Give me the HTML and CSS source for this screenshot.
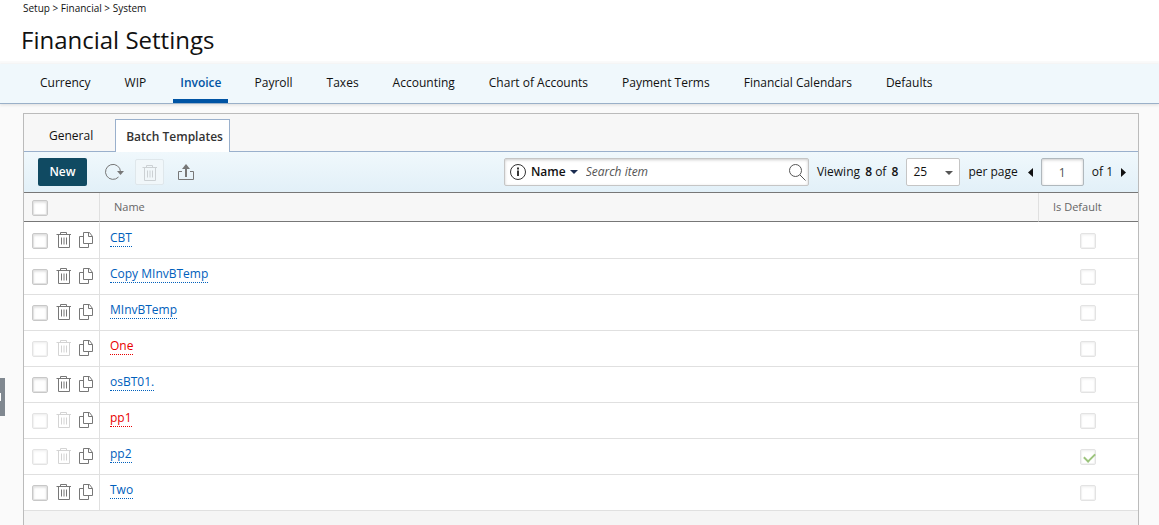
FILE: index.html
```html
<!DOCTYPE html>
<html lang="en">
<head>
<meta charset="utf-8">
<meta name="viewport" content="width=device-width, initial-scale=1">
<title>Financial Settings</title>
<link rel="stylesheet" href="styles.css">
</head>
<body>
<svg class="sprite" aria-hidden="true">
  <symbol id="trash" viewBox="0 0 16 17"><path d="M0.500 3.500H15M4.500 3.500v-2h6v2M2.500 3.500v13h11v-13M5.500 6.500v7M8 6.500v7M10.500 6.500v7"/></symbol>
  <symbol id="copy" viewBox="0 0 14 17"><path d="M4.500 5.500h-4v11h9v-4M4.500 1.500h6l3 4v7h-9zM9.500 1.500v4h4"/></symbol>
</svg>
<header class="page-header">
  <div class="breadcrumb">Setup &gt; Financial &gt; System</div>
  <h1 class="title">Financial Settings</h1>
</header>
<nav class="main-nav">
  <a class="nav-link" href="#">Currency</a>
  <a class="nav-link" href="#">WIP</a>
  <a class="nav-link active" href="#" aria-current="page">Invoice</a>
  <a class="nav-link" href="#">Payroll</a>
  <a class="nav-link" href="#">Taxes</a>
  <a class="nav-link" href="#">Accounting</a>
  <a class="nav-link" href="#">Chart of Accounts</a>
  <a class="nav-link" href="#">Payment Terms</a>
  <a class="nav-link" href="#">Financial Calendars</a>
  <a class="nav-link" href="#">Defaults</a>
</nav>
<button class="drawer" aria-label="Open side panel"></button>
<main class="panel">
  <div class="tabs">
    <a class="tab" href="#">General</a>
    <a class="tab selected" href="#">Batch Templates</a>
  </div>
  <div class="toolbar">
    <button class="new-btn">New</button>
    <button class="tool" aria-label="Refresh"><svg width="20" height="18" viewBox="0 0 20 18"><path d="M14.500 14A7.500 7.500 0 1 1 16.500 8.500"/><path class="solid" d="M13 8h7l-3.500 4z"/></svg></button>
    <button class="tool disabled" aria-label="Delete" disabled><svg width="16" height="17"><use href="#trash"/></svg></button>
    <button class="tool" aria-label="Export"><svg width="18" height="17" viewBox="0 0 18 17"><path d="M5 7.500H1.500v8h15v-8H13"/><path class="thick" d="M9 2v11"/><path class="solid" d="M9 0l4 5H5z"/></svg></button>
    <div class="search">
      <svg class="info" width="16" height="16" viewBox="0 0 16 16"><circle cx="8" cy="8" r="7.500"/><path class="thick" d="M8 6.500V12M8 3.500v2"/></svg>
      <button class="field-btn">Name <svg width="8" height="4" viewBox="0 0 8 4"><path d="M0 0h8L4 4z"/></svg></button>
      <input class="search-input" type="text" placeholder="Search item" aria-label="Search item">
      <button class="search-btn" aria-label="Search"><svg width="17" height="17" viewBox="0 0 17 17"><circle cx="6.500" cy="6.500" r="6"/><path d="M11 11l5.500 5.500"/></svg></button>
    </div>
    <span class="viewing">Viewing <b>8</b> of <b>8</b></span>
    <label class="page-size"><span class="select-box"><select class="size-select"><option>25</option><option>50</option></select><svg class="chevron" width="8" height="4" viewBox="0 0 8 4"><path d="M0 0h8L4 4z"/></svg></span>per page</label>
    <div class="pager">
      <button class="arrow" aria-label="Previous page"><svg width="5" height="9" viewBox="0 0 5 9"><path d="M5 0v9L0 4.500z"/></svg></button>
      <label class="page-label"><input class="page-input" type="text" value="1" aria-label="Page">of 1</label>
      <button class="arrow" aria-label="Next page"><svg width="5" height="9" viewBox="0 0 5 9"><path d="M0 0v9l5-4.500z"/></svg></button>
    </div>
  </div>
  <table class="grid">
    <thead>
      <tr><th class="col-actions"><input class="check" type="checkbox" aria-label="Select all"></th><th class="col-name">Name</th><th class="col-default">Is Default</th></tr>
    </thead>
    <tbody>
      <tr>
        <td class="col-actions"><div class="actions"><input class="check" type="checkbox" aria-label="Select CBT"><button class="icon" aria-label="Delete CBT"><svg width="16" height="17"><use href="#trash"/></svg></button><button class="icon" aria-label="Copy CBT"><svg width="14" height="17"><use href="#copy"/></svg></button></div></td>
        <td class="col-name"><a class="name" href="#">CBT</a></td>
        <td class="col-default"><input class="check" type="checkbox" disabled aria-label="CBT is default"></td>
      </tr>
      <tr>
        <td class="col-actions"><div class="actions"><input class="check" type="checkbox" aria-label="Select Copy MInvBTemp"><button class="icon" aria-label="Delete Copy MInvBTemp"><svg width="16" height="17"><use href="#trash"/></svg></button><button class="icon" aria-label="Copy Copy MInvBTemp"><svg width="14" height="17"><use href="#copy"/></svg></button></div></td>
        <td class="col-name"><a class="name" href="#">Copy MInvBTemp</a></td>
        <td class="col-default"><input class="check" type="checkbox" disabled aria-label="Copy MInvBTemp is default"></td>
      </tr>
      <tr>
        <td class="col-actions"><div class="actions"><input class="check" type="checkbox" aria-label="Select MInvBTemp"><button class="icon" aria-label="Delete MInvBTemp"><svg width="16" height="17"><use href="#trash"/></svg></button><button class="icon" aria-label="Copy MInvBTemp"><svg width="14" height="17"><use href="#copy"/></svg></button></div></td>
        <td class="col-name"><a class="name" href="#">MInvBTemp</a></td>
        <td class="col-default"><input class="check" type="checkbox" disabled aria-label="MInvBTemp is default"></td>
      </tr>
      <tr>
        <td class="col-actions"><div class="actions"><input class="check" type="checkbox" disabled aria-label="Select One"><button class="icon" disabled aria-label="Delete One"><svg width="16" height="17"><use href="#trash"/></svg></button><button class="icon" aria-label="Copy One"><svg width="14" height="17"><use href="#copy"/></svg></button></div></td>
        <td class="col-name"><a class="name inactive" href="#">One</a></td>
        <td class="col-default"><input class="check" type="checkbox" disabled aria-label="One is default"></td>
      </tr>
      <tr>
        <td class="col-actions"><div class="actions"><input class="check" type="checkbox" aria-label="Select osBT01."><button class="icon" aria-label="Delete osBT01."><svg width="16" height="17"><use href="#trash"/></svg></button><button class="icon" aria-label="Copy osBT01."><svg width="14" height="17"><use href="#copy"/></svg></button></div></td>
        <td class="col-name"><a class="name" href="#">osBT01.</a></td>
        <td class="col-default"><input class="check" type="checkbox" disabled aria-label="osBT01. is default"></td>
      </tr>
      <tr>
        <td class="col-actions"><div class="actions"><input class="check" type="checkbox" disabled aria-label="Select pp1"><button class="icon" disabled aria-label="Delete pp1"><svg width="16" height="17"><use href="#trash"/></svg></button><button class="icon" aria-label="Copy pp1"><svg width="14" height="17"><use href="#copy"/></svg></button></div></td>
        <td class="col-name"><a class="name inactive" href="#">pp1</a></td>
        <td class="col-default"><input class="check" type="checkbox" disabled aria-label="pp1 is default"></td>
      </tr>
      <tr>
        <td class="col-actions"><div class="actions"><input class="check" type="checkbox" disabled aria-label="Select pp2"><button class="icon" disabled aria-label="Delete pp2"><svg width="16" height="17"><use href="#trash"/></svg></button><button class="icon" aria-label="Copy pp2"><svg width="14" height="17"><use href="#copy"/></svg></button></div></td>
        <td class="col-name"><a class="name" href="#">pp2</a></td>
        <td class="col-default"><input class="check" type="checkbox" disabled checked aria-label="pp2 is default"></td>
      </tr>
      <tr>
        <td class="col-actions"><div class="actions"><input class="check" type="checkbox" aria-label="Select Two"><button class="icon" aria-label="Delete Two"><svg width="16" height="17"><use href="#trash"/></svg></button><button class="icon" aria-label="Copy Two"><svg width="14" height="17"><use href="#copy"/></svg></button></div></td>
        <td class="col-name"><a class="name" href="#">Two</a></td>
        <td class="col-default"><input class="check" type="checkbox" disabled aria-label="Two is default"></td>
      </tr>
    </tbody>
  </table>
</main>
</body>
</html>
```
FILE: styles.css
```css
* { box-sizing: border-box; }
body {
  margin: 0;
  min-height: 100vh;
  display: flex;
  flex-direction: column;
  background: #fafafa;
  color: #111;
  font: 12px/18px "Open Sans", sans-serif;
}
button, input, select { font: inherit; color: inherit; }
button { border: 0; padding: 0; background: none; cursor: pointer; }
a { color: inherit; text-decoration: none; }
svg { display: block; }
.sprite { position: absolute; width: 0; height: 0; }

.page-header { background: #fff; padding: 1px 21px 5px; }
.breadcrumb { font-size: 10px; line-height: 14px; padding-left: 2px; }
.title { margin: 9px 0 0; font-size: 24px; line-height: 32px; font-weight: 400; }

.main-nav {
  display: flex;
  gap: 20px;
  margin-top: 3px;
  padding: 0 33px;
  background: #f0f8fc;
  border-bottom: 1px solid #9ab0c8;
  box-shadow: 0 1px 3px #ddd;
}
.nav-link {
  padding: 10px 7px 7px;
  border-bottom: 4px solid transparent;
  white-space: nowrap;
}
.nav-link.active { padding-right: 6px; color: #0054a4; border-color: #0054a4; font-weight: 600; }

.drawer {
  position: absolute;
  left: 0;
  top: 378px;
  width: 5px;
  height: 38px;
  background: #808890;
}
.drawer::before {
  content: "";
  display: block;
  width: 1px;
  height: 8px;
  background: #fff;
}

.panel {
  flex: 1;
  margin: 9px 20px 0 23px;
  border: 1px solid #bbb;
  border-bottom: 0;
  background: #f5f5f5;
}
.tabs {
  display: flex;
  align-items: flex-end;
  height: 38px;
  padding-left: 14px;
  border-bottom: 1px solid #9ab0cc;
  background: #f7f7f7;
}
.tab { padding: 8px 11px 6px; margin-right: 11px; }
.tab.selected {
  margin: 0 0 -1px;
  padding: 8px 6px 6px 10px;
  background: #fff;
  border: 1px solid #9ab0cc;
  border-bottom: 0;
  font-weight: 600;
  color: #333;
}

.toolbar {
  display: flex;
  align-items: center;
  height: 41px;
  padding: 0 12px 0 14px;
  background: linear-gradient(#f0f8fc, #e2f0f8);
  border-bottom: 1px solid #777;
}
.new-btn {
  width: 49px;
  height: 28px;
  border-radius: 2px;
  background: #104a62;
  color: #fff;
  font-weight: 600;
  margin-right: 12px;
}
.tool {
  display: flex;
  align-items: center;
  justify-content: center;
  width: 29px;
  height: 26px;
  margin-right: 7px;
  border: 1px solid transparent;
}
.tool svg, .icon svg { flex: none; fill: none; stroke: #777; }
.tool .solid { fill: #777; stroke: none; }
.tool .thick { stroke-width: 2; }
.tool.disabled { border-color: #dfe7eb; background: #f1f7fa; border-radius: 2px; }
.tool.disabled svg { stroke: #ccd1d4; }

.search {
  display: flex;
  align-items: center;
  flex: 0 1 305px;
  min-width: 0;
  height: 28px;
  margin-left: auto;
  padding: 0 2px 0 5px;
  border: 1px solid #c5c5c5;
  border-radius: 2px;
  background: #fff;
  box-shadow: inset 0 1px 3px #ccc;
}
.info { flex: none; fill: none; stroke: #333; }
.info .thick { stroke-width: 2; }
.field-btn { display: flex; align-items: center; gap: 4px; margin: 0 8px 0 5px; font-weight: 600; }
.field-btn svg { fill: #1b2c50; }
.search-input { flex: 1; min-width: 0; border: 0; padding: 0; background: none; outline: 0; }
.search-input::placeholder { color: #555; font-style: italic; opacity: 1; }
.search-btn svg { fill: none; stroke: #555; }
.viewing { margin: 0 8px; white-space: nowrap; }
.viewing b { margin-left: 2px; font-weight: 600; }
.page-size, .page-label { display: flex; align-items: center; gap: 8px; white-space: nowrap; }
.select-box { position: relative; }
.size-select {
  appearance: none;
  display: block;
  width: 54px;
  height: 28px;
  padding: 0 6px;
  border: 1px solid #c5c5c5;
  border-radius: 2px;
  background: #fff;
}
.chevron { position: absolute; right: 7px; top: 13px; fill: #555; pointer-events: none; }
.pager { display: flex; align-items: center; gap: 8px; margin-left: 10px; }
.arrow svg { fill: #111; }
.page-input {
  width: 43px;
  height: 28px;
  padding: 0;
  border: 1px solid #b0b8bd;
  border-radius: 2px;
  background: #fff;
  box-shadow: inset 0 1px 3px #ccc;
  text-align: center;
  color: #555;
}

.grid { width: 100%; border-collapse: separate; border-spacing: 0; background: #fff; }
.grid th, .grid td { padding: 0; text-align: left; vertical-align: top; }
.grid thead th {
  height: 29px;
  vertical-align: middle;
  background: #f7f7f7;
  border-bottom: 1px solid #777;
  color: #666;
  font-size: 11px;
  line-height: 16px;
  font-weight: 400;
}
.grid td { height: 36px; border-bottom: 1px solid #e0e0e0; }
.grid tbody tr:first-child td { height: 37px; border-top: 1px solid #fff; }
.grid .col-actions { width: 76px; border-right: 1px solid #e0e0e0; padding-left: 8px; }
.grid .col-name { padding-left: 10px; }
.grid th.col-name { padding-left: 14px; }
.grid .col-default { width: 100px; }
.grid th.col-default { padding-left: 14px; border-left: 1px solid #e0e0e0; }
.grid td.col-default { padding-top: 10px; }
.check {
  appearance: none;
  display: block;
  width: 16px;
  height: 16px;
  margin: 0;
  border: 1px solid #c8c8c8;
  border-radius: 2px;
  background: #fff;
  box-shadow: inset 0 0 0 1px #e2e2e2, inset 0 1px 3px #ccc;
}
thead .check { margin-top: 2px; }
.check:disabled { border-color: #e3e3e3; box-shadow: inset 0 0 0 1px #f2f2f2, inset 0 1px 3px #eee; }
.col-default .check { margin: 0 auto; }
.check:checked::before {
  content: "";
  display: block;
  width: 9px;
  height: 5px;
  margin: 3px 0 0 3px;
  border: solid #9cc47c;
  border-width: 0 0 2px 2px;
  transform: rotate(-45deg);
}
.actions { display: flex; align-items: flex-start; padding-top: 8px; }
.actions .check { margin: 2px 8px 0 0; }
.icon + .icon { margin-left: 7px; }
.icon:disabled svg { stroke: #d4d4d4; }
.name { display: inline-block; margin-top: 6px; line-height: 17px; color: #0060bc; border-bottom: 1px dotted #0060bc; }
.name.inactive { color: #e80000; border-color: #e80000; }
```
